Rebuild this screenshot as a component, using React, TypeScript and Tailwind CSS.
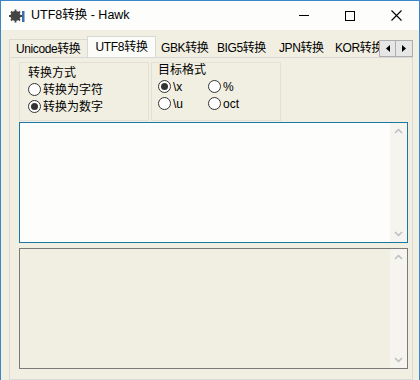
import React from 'react'

const font = { fontFamily: '"Liberation Sans", "Noto Sans CJK SC", sans-serif' }

function Radio({ checked, label }: { checked?: boolean; label: string }) {
  return (
    <div className="flex items-center gap-[2px] h-[17px]">
      <span className="w-[13px] h-[13px] rounded-full border border-[#333] bg-white flex items-center justify-center">
        {checked && <span className="w-[7px] h-[7px] rounded-full bg-[#333]" />}
      </span>
      <span className="text-[12px] text-black leading-none">{label}</span>
    </div>
  )
}

function ScrollArrows() {
  return (
    <div className="w-[17px] flex flex-col justify-between items-center py-[5px] bg-[#f5f4ee]">
      <svg width="9" height="6" viewBox="0 0 9 6">
        <path d="M1 5 L4.5 1.5 L8 5" fill="none" stroke="#bdbdc4" strokeWidth="1.5" />
      </svg>
      <svg width="9" height="6" viewBox="0 0 9 6">
        <path d="M1 1 L4.5 4.5 L8 1" fill="none" stroke="#bdbdc4" strokeWidth="1.5" />
      </svg>
    </div>
  )
}

// tab widths measured off the screenshot
const tabs = [
  { label: 'Unicode转换', w: 'w-[79px]' },
  { label: 'UTF8转换', w: 'w-[69px]' },
  { label: 'GBK转换', w: 'w-[56px]' },
  { label: 'BIG5转换', w: 'w-[62px]' },
  { label: 'JPN转换', w: 'w-[56px]' },
  { label: 'KOR转换', w: 'w-[60px]' },
]

export default function App() {
  return (
    <div className="w-[420px] h-[380px] overflow-hidden flex flex-col bg-[#f1efe2] border-l border-t border-r border-[#3a86c8]" style={font}>
      {/* title bar */}
      <div className="h-[29px] bg-[#fdfdfb] flex items-center shrink-0">
        <svg className="ml-[8px]" width="16" height="16" viewBox="0 0 16 16">
          <circle cx="6.5" cy="8" r="5" fill="#444" />
          <circle cx="6.5" cy="8" r="1.8" fill="#fdfdfb" />
          <path d="M6.5 1.5v13M0 8h13M2 3.5l9 9M11 3.5l-9 9" stroke="#444" strokeWidth="1.8" />
          <rect x="13" y="3" width="2.5" height="11" fill="#3d6fb0" />
        </svg>
        <span className="ml-[6px] text-[12.5px] text-black">UTF8转换 - Hawk</span>
        <div className="ml-auto flex items-center h-full">
          <div className="w-[46px] h-full flex items-center justify-center">
            <div className="w-[10px] h-px bg-black" />
          </div>
          <div className="w-[46px] h-full flex items-center justify-center">
            <div className="w-[10px] h-[10px] border border-black" />
          </div>
          <div className="w-[46px] h-full flex items-center justify-center">
            <svg width="11" height="11" viewBox="0 0 11 11">
              <path d="M0.5 0.5L10.5 10.5M10.5 0.5L0.5 10.5" stroke="#000" strokeWidth="1.1" />
            </svg>
          </div>
        </div>
      </div>

      {/* body */}
      <div className="flex-1 flex flex-col pl-[8px] pr-[6px] pt-[7px]">
        {/* tabs */}
        <div className="flex items-end h-[20px] relative">
          <div className="flex items-end overflow-hidden w-[372px]">
            {tabs.map((t, i) => (
              <div
                key={t.label}
                className={
                  i === 1
                    ? `${t.w} h-[21px] flex items-center justify-center bg-[#fbfbf7] border border-b-0 border-[#d8d8d8] text-[12px] shrink-0 -mx-[1px] relative z-10 whitespace-nowrap tracking-[-0.3px]`
                    : i === 0
                      ? `${t.w} h-[18px] flex items-center justify-start pl-[6px] border-l border-t border-[#dcdad0] text-[12px] shrink-0 whitespace-nowrap tracking-[-0.4px]`
                      : `${t.w} h-[18px] flex items-center justify-start pl-[6px] text-[12px] shrink-0 whitespace-nowrap tracking-[-0.4px]`
                }
              >
                {t.label}
              </div>
            ))}
          </div>
          <div className="absolute right-0 top-[3px] flex">
            <div className="w-[17px] h-[17px] shrink-0 border border-[#adadad] bg-[#e6e6e6] flex items-center justify-center">
              <svg width="4" height="7" viewBox="0 0 4 7"><path d="M4 0L0 3.5L4 7Z" fill="#000" /></svg>
            </div>
            <div className="w-[17px] h-[17px] shrink-0 border border-l-0 border-[#adadad] bg-[#e6e6e6] flex items-center justify-center">
              <svg width="4" height="7" viewBox="0 0 4 7"><path d="M0 0L4 3.5L0 7Z" fill="#000" /></svg>
            </div>
          </div>
        </div>

        {/* panel */}
        <div className="flex-1 border border-[#d9d9d9] flex flex-col pl-[9px] pr-[4px] pt-[4px]">
          <div className="flex gap-[2px] h-[59px]">
            <div className="w-[130px] border border-[#e3e1d6] px-[8px] pt-[3px] flex flex-col">
              <div className="text-[12px] leading-[15px] h-[15px]">转换方式</div>
              <div className="flex flex-col">
                <Radio label="转换为字符" />
                <Radio checked label="转换为数字" />
              </div>
            </div>
            <div className="w-[130px] border border-[#e3e1d6] px-[6px] flex flex-col">
              <div className="text-[12px] leading-[15px] h-[15px]">目标格式</div>
              <div className="grid grid-cols-[50px_50px]">
                <Radio checked label="\x" />
                <Radio label="%" />
                <Radio label="\u" />
                <Radio label="oct" />
              </div>
            </div>
          </div>

          <div className="mt-[1px] h-[121px] border border-[#1b77a6] bg-[#fdfdfb] flex justify-end">
            <ScrollArrows />
          </div>
          <div className="mt-[5px] h-[121px] border border-[#7a7a7a] flex justify-end">
            <ScrollArrows />
          </div>
        </div>
      </div>
    </div>
  )
}
